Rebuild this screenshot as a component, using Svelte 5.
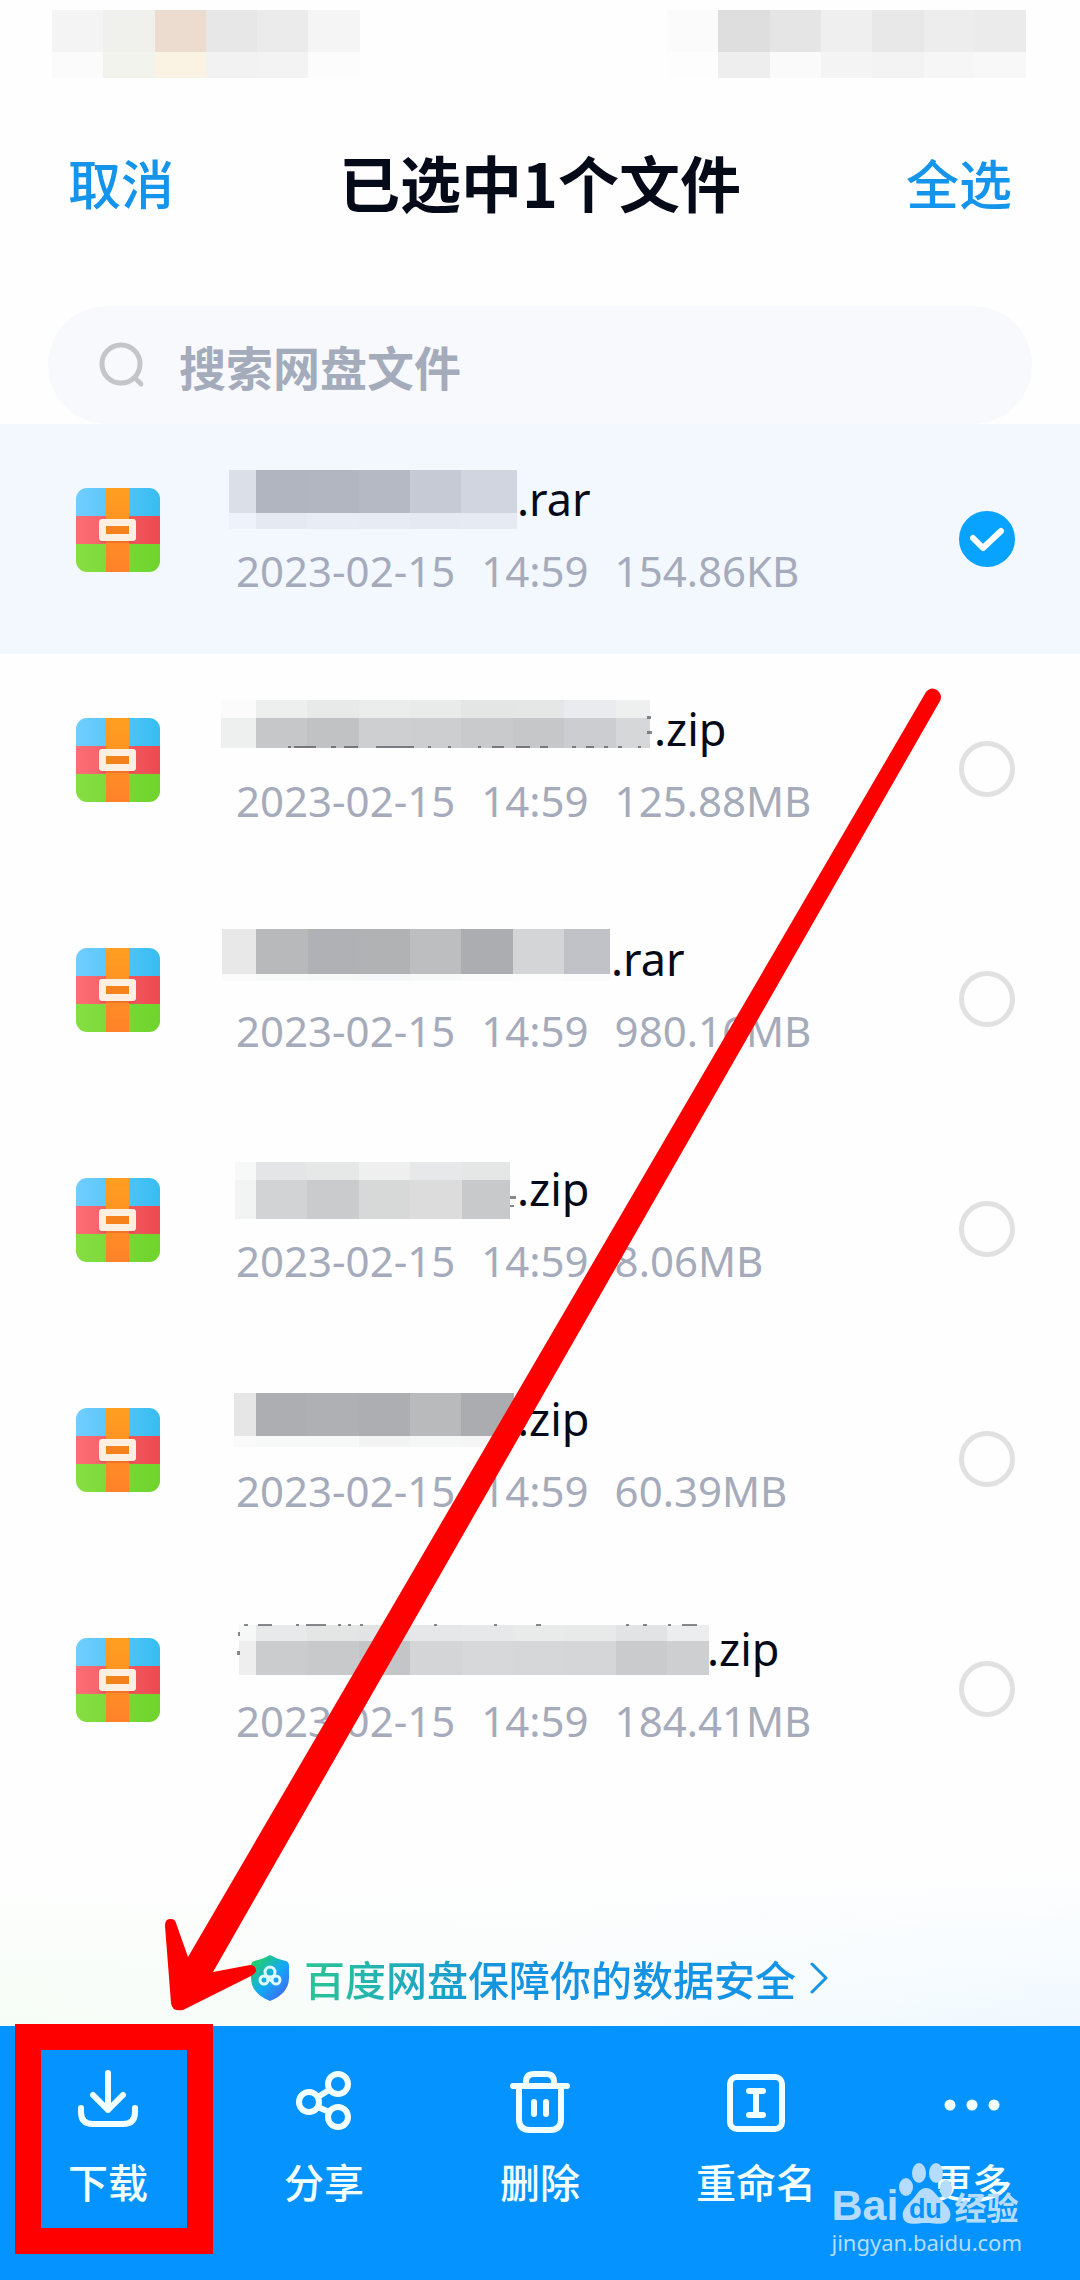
<script>
	// masked names: xs are the column edges, ys the row edges, rows the fills
	let files = [
		{
			ext: '.rar',
			date: '2023-02-15',
			time: '14:59',
			size: '154.86KB',
			checked: true,
			end: 301,
			xs: [13, 40, 91, 143, 194, 245, 301],
			ys: [6, 49, 65],
			rows: [
				['#dbe0e8', '#b0b5bf', '#b1b6c0', '#b4b9c3', '#c5cad4', '#d0d5df'],
				['#eef2fa', '#e4e9f2', '#e8ecf5', '#e7ebf4', '#e4e9f2', '#e6eaf3']
			],
			marks: []
		},
		{
			ext: '.zip',
			date: '2023-02-15',
			time: '14:59',
			size: '125.88MB',
			checked: false,
			end: 438,
			xs: [5, 40, 91, 143, 194, 245, 297, 348, 400, 434],
			ys: [6, 24, 54],
			rows: [
				['#fbfbfb', '#edeeee', '#e8e9e9', '#ebecec', '#e8ebea', '#e4e6e6', '#e5e7e7', '#e9ebee', '#eeefef'],
				['#eef0f0', '#c6c7c9', '#c1c2c4', '#cecfd1', '#cdced0', '#c9cacc', '#c6c7c9', '#cccdd0', '#d6d7d9']
			],
			marks: [[72, 52, 3, 2], [78, 52, 22, 2], [115, 52, 5, 2], [128, 52, 14, 2], [160, 52, 38, 2], [212, 52, 3, 2], [232, 52, 3, 2], [262, 52, 3, 2], [276, 52, 12, 2], [300, 52, 14, 2], [324, 52, 8, 2], [356, 52, 4, 2], [370, 52, 8, 2], [388, 52, 4, 2], [402, 52, 4, 2], [422, 52, 3, 2], [431, 22, 4, 3], [431, 37, 5, 3]]
		},
		{
			ext: '.rar',
			date: '2023-02-15',
			time: '14:59',
			size: '980.16MB',
			checked: false,
			end: 395,
			xs: [6, 40, 92, 143, 194, 245, 297, 348, 394],
			ys: [5, 50, 57],
			rows: [
				['#e8e8e8', '#b8b9bb', '#b0b1b4', '#b1b2b4', '#bdbec0', '#acadb1', '#d4d5d7', '#c1c2c7'],
				['#fbfbfb', '#f8f9f9', '#f7f8f8', '#f6f7f8', '#f7f8f8', '#fbfbfb', '#fcfcfc', '#fbfbfb']
			],
			marks: []
		},
		{
			ext: '.zip',
			date: '2023-02-15',
			time: '14:59',
			size: '8.06MB',
			checked: false,
			end: 301,
			xs: [19, 40, 91, 143, 194, 246, 294],
			ys: [8, 26, 65],
			rows: [
				['#f7f8f8', '#e4e5e7', '#e5e8e7', '#efefef', '#e6e8ea', '#e5e7e6'],
				['#f1f4f3', '#d2d3d5', '#cacbcd', '#d7d8d8', '#dcdcdd', '#c8c9cb']
			],
			marks: [[294, 42, 6, 3], [294, 51, 4, 2]]
		},
		{
			ext: '.zip',
			date: '2023-02-15',
			time: '14:59',
			size: '60.39MB',
			checked: false,
			end: 301,
			xs: [18, 40, 91, 143, 194, 245, 298],
			ys: [9, 52, 63],
			rows: [
				['#e6e6e7', '#adaeb2', '#afb0b4', '#adaeb2', '#b9babc', '#abacb0'],
				['#fafafa', '#f7f8f8', '#f7f8f8', '#f3f3f4', '#f5f6f6', '#f5f5f6']
			],
			marks: []
		},
		{
			ext: '.zip',
			date: '2023-02-15',
			time: '14:59',
			size: '184.41MB',
			checked: false,
			end: 491,
			xs: [23, 40, 91, 143, 194, 246, 297, 348, 400, 451, 493],
			ys: [11, 27, 61],
			rows: [
				['#f6f7f7', '#e8e9ea', '#e4e6e6', '#e1e3e4', '#e6e7e8', '#e7e8e9', '#e9eaea', '#e8e9e9', '#e2e3e4', '#ecedee'],
				['#eeeeef', '#caccce', '#c8c9cb', '#c3c5c7', '#d4d5d6', '#d7d8d9', '#d6d7d9', '#d5d6d8', '#cacbcd', '#cecfd1']
			],
			marks: [[28, 10, 4, 2], [42, 10, 14, 2], [80, 10, 3, 2], [90, 10, 20, 2], [122, 10, 3, 2], [132, 10, 3, 2], [144, 10, 3, 2], [218, 10, 3, 2], [278, 10, 3, 2], [320, 10, 5, 2], [410, 10, 3, 2], [427, 10, 4, 2], [452, 10, 3, 2], [466, 10, 15, 2], [22, 18, 2, 4], [21, 37, 3, 4]]
		}
	];

	let leftStatus = {
		xs: [0, 51, 103, 154, 205, 256, 308],
		rows: [
			['#f4f4f4', '#f0f0ec', '#ecdcd0', '#e7e7e7', '#ebebeb', '#f5f5f5'],
			['#fbfbfb', '#f3f3ee', '#faf2e3', '#f2f2f2', '#f3f3f3', '#fcfcfc']
		]
	};

	let rightStatus = {
		xs: [0, 51, 103, 154, 205, 257, 308, 359],
		rows: [
			['#fbfbfb', '#dedede', '#e5e5e5', '#efefef', '#e8e8e8', '#ededed', '#ebebeb'],
			['#fdfdfd', '#eeeeee', '#fafafa', '#f4f4f4', '#f3f3f3', '#f6f6f6', '#f8f8f8']
		]
	};

	let keyword = '';

	function selectAll() {
		files = files.map(file => ({ ...file, checked: true }));
	}

	function cancel() {
		files = files.map(file => ({ ...file, checked: false }));
	}

	$: selected = files.filter(file => file.checked).length;
</script>

<main>
	<div class="status">
		{#each [leftStatus, rightStatus] as part}
			<svg width={part.xs[part.xs.length - 1]} height="68" shape-rendering="crispEdges" aria-hidden="true">
				{#each part.rows as row, r}
					{#each row as fill, c}
						<rect x={part.xs[c]} y={r * 42} width={part.xs[c + 1] - part.xs[c]} height={r ? 26 : 42} {fill} />
					{/each}
				{/each}
			</svg>
		{/each}
	</div>

	<header>
		<button on:click={cancel}>取消</button>
		<h1>已选中{selected}个文件</h1>
		<button on:click={selectAll}>全选</button>
	</header>

	<label class="search">
		<svg width="48" height="48" viewBox="0 0 48 48" fill="none" stroke="#c3c5c9" stroke-width="5" stroke-linecap="round" aria-hidden="true">
			<circle cx="24" cy="23" r="19" />
			<path d="M38 37L44 43" />
		</svg>
		<input type="text" placeholder="搜索网盘文件" aria-label="搜索网盘文件" bind:value={keyword} />
	</label>

	<ul class="files">
		{#each files as file, i}
			<li class:selected={file.checked}>
				<svg class="archive" width="84" height="84" viewBox="0 0 84 84" aria-hidden="true">
					<defs>
						<linearGradient id="blue{i}" x1="0" y1="0" x2="1" y2="0"><stop stop-color="#72cdff" /><stop offset="1" stop-color="#37bdf0" /></linearGradient>
						<linearGradient id="red{i}" x1="0" y1="0" x2="1" y2="0"><stop stop-color="#fc6e76" /><stop offset="1" stop-color="#ec4a50" /></linearGradient>
						<linearGradient id="green{i}" x1="0" y1="0" x2="1" y2="0"><stop stop-color="#86de43" /><stop offset="1" stop-color="#6fd42c" /></linearGradient>
						<linearGradient id="strap{i}" x1="0" y1="0" x2="0" y2="1"><stop stop-color="#ff9f20" /><stop offset="1" stop-color="#ff8229" /></linearGradient>
						<clipPath id="box{i}"><rect width="84" height="84" rx="11" /></clipPath>
					</defs>
					<g clip-path="url(#box{i})">
						<rect width="84" height="28" fill="url(#blue{i})" />
						<rect y="28" width="84" height="28" fill="url(#red{i})" />
						<rect y="56" width="84" height="28" fill="url(#green{i})" />
						<rect x="30" width="23" height="84" fill="url(#strap{i})" />
					</g>
					<rect x="23" y="33" width="37" height="22" rx="3" fill="#d8402f" opacity=".35" />
					<rect x="23" y="31" width="37" height="22" rx="3" fill="#ffefe0" />
					<rect x="30" y="38" width="23" height="8" fill="#f5821b" />
				</svg>
				<div class="info">
					<div class="name">
						<svg width={file.end} height="70" shape-rendering="crispEdges" overflow="visible" aria-hidden="true">
							{#each file.rows as row, r}
								{#each row as fill, c}
									<rect x={file.xs[c]} y={file.ys[r]} width={file.xs[c + 1] - file.xs[c]} height={file.ys[r + 1] - file.ys[r]} {fill} />
								{/each}
							{/each}
							{#each file.marks as [x, y, width, height]}
								<rect {x} {y} {width} {height} fill="#55565c" opacity=".7" />
							{/each}
						</svg>
						<span>{file.ext}</span>
					</div>
					<div class="meta">
						<span>{file.date}</span>
						<span>{file.time}</span>
						<span>{file.size}</span>
					</div>
				</div>
				<label class="check">
					<input type="checkbox" aria-label="{file.ext} {file.size}" bind:checked={file.checked} />
					{#if file.checked}
						<svg width="56" height="56" viewBox="0 0 56 56" fill="none" stroke="#fff" stroke-width="6" stroke-linecap="round" stroke-linejoin="round" aria-hidden="true">
							<path d="M14 27L24 37L42 20" />
						</svg>
					{/if}
				</label>
			</li>
		{/each}
	</ul>

	<div class="safety">
		<a href="#safety">
			<svg width="40" height="48" viewBox="0 0 40 48" aria-hidden="true">
				<defs>
					<linearGradient id="shield" x1="0" y1="0.1" x2="0.8" y2="1"><stop offset=".1" stop-color="#22cd6e" /><stop offset=".55" stop-color="#13a9f4" /><stop offset="1" stop-color="#4169f2" /></linearGradient>
				</defs>
				<path d="M20 1C25 4 31 6 36 7Q39 8 39 12V24C39 35 31 43 20 47C9 43 1 35 1 24V12Q1 8 4 7C9 6 15 4 20 1Z" fill="url(#shield)" />
				<g fill="none" stroke="#dcfbff" stroke-width="3">
					<circle cx="20" cy="18" r="5" />
					<circle cx="14" cy="26" r="4" />
					<circle cx="26" cy="26" r="4" />
					<path d="M17 24L23 28" />
				</g>
			</svg>
			<span>百度网盘保障你的数据安全</span>
			<svg width="18" height="32" viewBox="0 0 18 32" fill="none" stroke="#1593e6" stroke-width="3" stroke-linecap="round" stroke-linejoin="round" aria-hidden="true">
				<path d="M2 2L16 16L2 30" />
			</svg>
		</a>
	</div>

	<nav>
		<button class="download">
			<svg width="64" height="64" viewBox="0 0 64 64" aria-hidden="true">
				<path d="M32 4V41M17 26L32 41L47 26M5 39V43Q5 55 17 55H47Q59 55 59 43V39" />
			</svg>
			下载
		</button>
		<button>
			<svg width="64" height="64" viewBox="0 0 64 64" aria-hidden="true">
				<circle cx="17" cy="33" r="10" />
				<circle cx="46" cy="15" r="10" />
				<circle cx="46" cy="48" r="10" />
				<path d="M26 28L37 21M26 38L37 43" />
			</svg>
			分享
		</button>
		<button>
			<svg width="64" height="64" viewBox="0 0 64 64" aria-hidden="true">
				<path d="M5 17H59M18 17V13Q18 5 26 5H38Q46 5 46 13V17M11 17V50Q11 61 22 61H42Q53 61 53 50V17M26 33V45M38 33V45" />
			</svg>
			删除
		</button>
		<button>
			<svg width="64" height="64" viewBox="0 0 64 64" aria-hidden="true">
				<rect x="6" y="8" width="52" height="52" rx="7" />
				<path d="M25 22H39M32 22V46M25 46H39" />
			</svg>
			重命名
		</button>
		<button>
			<svg class="dots" width="64" height="64" viewBox="0 0 64 64" aria-hidden="true">
				<circle cx="10" cy="36" r="5.5" />
				<circle cx="32" cy="36" r="5.5" />
				<circle cx="54" cy="36" r="5.5" />
			</svg>
			更多
		</button>
		<div class="frame"></div>
	</nav>

	<svg class="arrow" width="800" height="1330" viewBox="160 685 800 1330" aria-hidden="true">
		<path d="M926 692Q931 686 937 690Q943 695 940 701L213 1972L250 1965Q256 1965 256 1971Q255 1974 251 1976L183 2010Q172 2012 171 2003L165 1926Q165 1918 171 1919Q175 1919 176 1923L188 1957Z" fill="#f00" />
	</svg>

	<div class="watermark">
		<div class="brand">
			<span class="latin">Bai</span>
			<span class="paw">
				<svg width="54" height="66" viewBox="0 0 54 66" aria-hidden="true">
					<ellipse cx="8" cy="27" rx="7" ry="9" />
					<ellipse cx="21" cy="13" rx="7" ry="10" />
					<ellipse cx="38" cy="13" rx="7" ry="10" />
					<ellipse cx="48" cy="29" rx="6" ry="9" />
					<path d="M28 28C35 28 38 35 43 40C50 46 55 52 51 60C47 66 38 63 28 63C18 63 10 66 6 60C2 52 8 46 14 40C19 35 21 28 28 28Z" />
				</svg>
				<b>du</b>
			</span>
			<span class="cn">经验</span>
		</div>
		<div class="site">jingyan.baidu.com</div>
	</div>
</main>

<style>
	:global(body) {
		margin: 0;
		background: #fefefe;
	}

	main {
		position: relative;
		min-height: 100vh;
		display: flex;
		flex-direction: column;
		overflow: hidden;
		font-family: 'Noto Sans', 'Noto Sans CJK SC', sans-serif;
		color: #050a18;
	}

	svg {
		display: block;
		flex: none;
	}

	button {
		border: 0;
		padding: 0;
		background: none;
		font-family: 'Noto Sans CJK SC', sans-serif;
		font-weight: 500;
		cursor: pointer;
	}

	.status {
		display: flex;
		justify-content: space-between;
		padding: 10px 54px 0 52px;
	}

	header {
		display: flex;
		justify-content: space-between;
		align-items: center;
		padding: 0 68px;
		height: 208px;
	}

	header button {
		font-size: 53px;
		line-height: 80px;
		color: #1494ea;
	}

	h1 {
		margin: 0;
		font-family: 'Noto Sans CJK SC', sans-serif;
		font-size: 61px;
		line-height: 80px;
		font-weight: 700;
	}

	.search {
		display: flex;
		align-items: center;
		gap: 34px;
		height: 118px;
		margin: 20px 48px 0;
		padding: 0 49px;
		border-radius: 60px;
		background: #f8f9fd;
	}

	.search input {
		flex: 1;
		min-width: 0;
		border: 0;
		padding: 0;
		outline: none;
		background: none;
		font-family: 'Noto Sans CJK SC', sans-serif;
		font-size: 47px;
		font-weight: 700;
		color: #050a18;
	}

	.search input::placeholder {
		color: #a4abbb;
		opacity: 1;
	}

	.files {
		list-style: none;
		margin: 0;
		padding: 0;
	}

	li {
		display: flex;
		align-items: flex-start;
		height: 230px;
		padding: 0 65px 0 76px;
		box-sizing: border-box;
	}

	li.selected {
		background: #f3f8ff;
	}

	.archive {
		margin-top: 64px;
	}

	.info {
		flex: 1;
		padding: 40px 0 0 56px;
	}

	.name {
		display: flex;
		font-size: 45px;
		line-height: 70px;
		height: 70px;
	}

	.meta {
		display: flex;
		gap: 26px;
		padding-left: 20px;
		font-size: 42px;
		line-height: 74px;
		color: #a5abbb;
		white-space: nowrap;
	}

	.check {
		position: relative;
		align-self: center;
	}

	.check input {
		display: block;
		appearance: none;
		width: 56px;
		height: 56px;
		margin: 0;
		border: 5px solid #e1e1e1;
		border-radius: 50%;
	}

	.check input:checked {
		border-color: #08a2ff;
		background: #08a2ff;
	}

	.check svg {
		position: absolute;
		inset: 0;
		pointer-events: none;
	}

	.safety {
		flex: 1;
		display: flex;
		align-items: flex-end;
		justify-content: center;
		min-height: 222px;
		padding: 0 2px 18px 0;
		box-sizing: border-box;
		background: linear-gradient(180deg, #fefefe 30%, rgba(254, 254, 254, 0)), linear-gradient(90deg, #f6fdf6, #f8fcfc 50%, #f0f9ff);
	}

	.safety a {
		display: flex;
		align-items: center;
		gap: 14px;
		font-family: 'Noto Sans CJK SC', sans-serif;
		font-size: 41px;
		line-height: 60px;
		font-weight: 500;
		text-decoration: none;
	}

	.safety span {
		background: linear-gradient(90deg, #2bc594, #1593e0 40%, #1593e6);
		background-clip: text;
		color: transparent;
	}

	nav {
		position: relative;
		display: grid;
		grid-template-columns: repeat(5, 1fr);
		height: 254px;
		background: #0493ff;
	}

	nav button {
		display: flex;
		flex-direction: column;
		align-items: center;
		gap: 18px;
		padding-top: 43px;
		font-size: 40px;
		line-height: 60px;
		color: #f2ffff;
	}

	nav svg {
		fill: none;
		stroke: #f2ffff;
		stroke-width: 6;
		stroke-linecap: round;
		stroke-linejoin: round;
	}

	nav .dots {
		fill: #f2ffff;
		stroke: none;
	}

	/* highlight around the download button */
	.frame {
		position: absolute;
		left: 15px;
		top: -2px;
		width: 198px;
		height: 230px;
		box-sizing: border-box;
		border: 26px solid #f00;
		pointer-events: none;
	}

	.arrow {
		position: absolute;
		left: 160px;
		top: 685px;
		pointer-events: none;
	}

	.watermark {
		position: absolute;
		right: 58px;
		bottom: 22px;
		color: #b5dcff;
		pointer-events: none;
	}

	.brand {
		display: flex;
		align-items: flex-end;
		height: 66px;
	}

	.latin {
		font-family: 'Liberation Sans', sans-serif;
		font-size: 43px;
		line-height: 42px;
		font-weight: 700;
	}

	.paw {
		position: relative;
		fill: #b5dcff;
	}

	.paw b {
		position: absolute;
		left: 0;
		right: 0;
		bottom: 2px;
		font-family: 'Liberation Sans', sans-serif;
		font-size: 27px;
		line-height: 30px;
		text-align: center;
		color: #0493ff;
	}

	.cn {
		margin-left: 2px;
		font-family: 'Noto Sans CJK SC', sans-serif;
		font-size: 32px;
		line-height: 40px;
		font-weight: 700;
	}

	.site {
		font-size: 22px;
		line-height: 32px;
	}
</style>
